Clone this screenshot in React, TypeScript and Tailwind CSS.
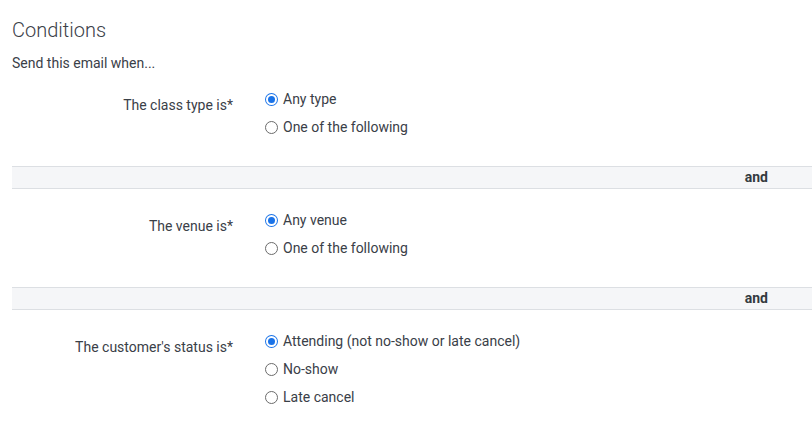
import React from 'react';

type Group = {
  label: string;
  options: string[];
};

const groups: Group[] = [
  { label: 'The class type is*', options: ['Any type', 'One of the following'] },
  { label: 'The venue is*', options: ['Any venue', 'One of the following'] },
  {
    label: "The customer's status is*",
    options: ['Attending (not no-show or late cancel)', 'No-show', 'Late cancel'],
  },
];

const Radio: React.FC<{ checked: boolean }> = ({ checked }) =>
  checked ? (
    <span className="w-[13px] h-[13px] rounded-full bg-[#1a73e8] flex items-center justify-center shrink-0">
      <span className="w-[11px] h-[11px] rounded-full bg-white flex items-center justify-center">
        <span className="w-[7px] h-[7px] rounded-full bg-[#1a73e8]" />
      </span>
    </span>
  ) : (
    <span className="w-[13px] h-[13px] rounded-full border border-[#6b6b6b] bg-white shrink-0" />
  );

const ConditionGroup: React.FC<{ group: Group }> = ({ group }) => (
  <div className="flex">
    <div className="w-[221px] text-right pt-[6px] leading-[28px]">{group.label}</div>
    <div className="ml-[32px] flex flex-col">
      {group.options.map((opt, i) => (
        <div key={i} className="h-[28px] flex items-center gap-[5px]">
          <Radio checked={i === 0} />
          <span>{opt}</span>
        </div>
      ))}
    </div>
  </div>
);

const AndBar: React.FC = () => (
  <div className="h-[23px] bg-[#f5f6f8] border-y border-[#dcdfe3] flex items-center justify-end pr-[44px] font-bold text-[#343a40]">
    and
  </div>
);

export default function App() {
  return (
    <div
      className="w-[812px] h-[434px] bg-white overflow-hidden pl-[12px] text-[14px] text-[#3a4048]"
      style={{ fontFamily: 'Roboto, "Liberation Sans", sans-serif' }}
    >
      <h2 className="text-[20px] font-light leading-[24px] mt-[18px]">Conditions</h2>
      <p className="mt-[11px] leading-[20px]">Send this email when...</p>

      <div className="mt-[12px]">
        <ConditionGroup group={groups[0]} />
      </div>
      <div className="mt-[25px]">
        <AndBar />
      </div>
      <div className="mt-[17px]">
        <ConditionGroup group={groups[1]} />
      </div>
      <div className="mt-[25px]">
        <AndBar />
      </div>
      <div className="mt-[17px]">
        <ConditionGroup group={groups[2]} />
      </div>
    </div>
  );
}
